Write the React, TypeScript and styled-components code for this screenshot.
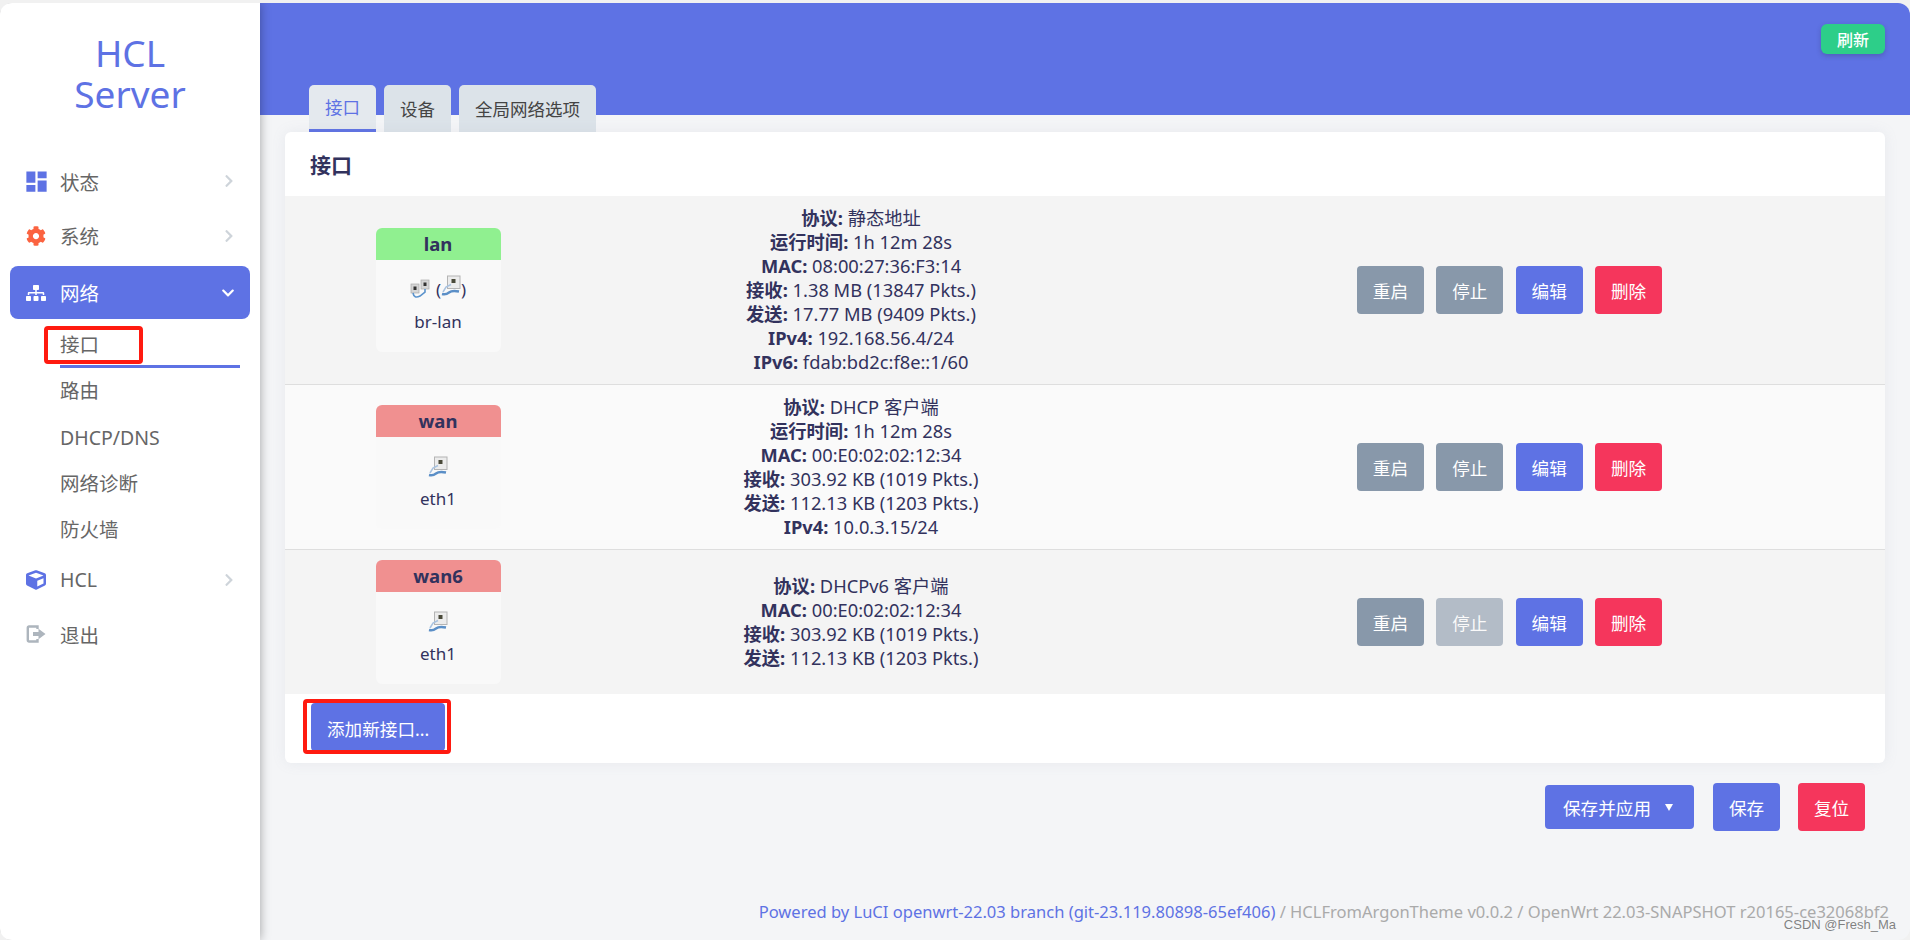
import styled, { createGlobalStyle } from "styled-components";
import { FaChevronDown, FaChevronRight, FaCog, FaCube, FaSitemap } from "react-icons/fa";
import { MdDashboard } from "react-icons/md";

const GlobalStyle = createGlobalStyle`
  html, body {
    margin: 0;
    padding: 0;
    background: #f1f1f1;
  }
  body {
    font-family: "Noto Sans", "Noto Sans CJK SC", sans-serif;
    color: #32325d;
  }
`;

const Shell = styled.div`
  display: grid;
  grid-template-columns: 260px 1fr;
  height: 937px;
  margin-top: 3px;
  border-radius: 12px;
  overflow: hidden;
  background: #f4f5f7;
  position: relative;
`;

const Sidebar = styled.aside`
  background: #fff;
  box-shadow: 0 0 10px rgba(0, 0, 0, 0.35);
  z-index: 2;
  display: flex;
  flex-direction: column;
`;

const Logo = styled.div`
  height: 152px;
  padding-top: 29px;
  box-sizing: border-box;
  text-align: center;
  font-size: 37px;
  line-height: 41px;
  color: #5e72e4;
`;

const MenuItem = styled.div<{ $active?: boolean }>`
  display: flex;
  align-items: center;
  height: ${(p) => (p.$active ? "53px" : "54.5px")};
  margin: ${(p) => (p.$active ? "2px 10px 3px" : "0 10px")};
  padding: 0 16px ${(p) => (p.$active ? "0" : "2px")};
  box-sizing: border-box;
  border-radius: 8px;
  font-size: 19.5px;
  color: ${(p) => (p.$active ? "#fff" : "#666")};
  background: ${(p) => (p.$active ? "#5e72e4" : "transparent")};
`;

const MenuIcon = styled.span<{ $color: string }>`
  width: 20px;
  height: 20px;
  margin-right: 14px;
  display: flex;
  align-items: center;
  justify-content: center;
  color: ${(p) => p.$color};
`;

const MenuLabel = styled.span`
  flex: 1;
`;

const Chevron = styled.span<{ $active?: boolean }>`
  display: flex;
  font-size: 14px;
  margin-right: ${(p) => (p.$active ? "-1px" : "-2px")};
  color: ${(p) => (p.$active ? "#fff" : "#ced4da")};
`;

const SubMenu = styled.div`
  display: flex;
  flex-direction: column;
`;

const SubItem = styled.div<{ $active?: boolean }>`
  position: relative;
  height: 46.3px;
  box-sizing: border-box;
  margin: 0 20px 0 60px;
  line-height: 46px;
  font-size: 19.5px;
  color: #666;
  border-bottom: ${(p) => (p.$active ? "3px solid #5e72e4" : "none")};
`;

const Highlight = styled.span<{ $menu?: boolean }>`
  position: absolute;
  border: 4px solid #ff1a10;
  border-radius: 4px;
  box-sizing: border-box;
  pointer-events: none;
  ${(p) =>
    p.$menu
      ? "left: -16px; top: 4px; width: 99px; height: 38px;"
      : "left: -8px; top: -4px; width: 148px; height: 55px;"}
`;

const Main = styled.main`
  display: flex;
  flex-direction: column;
  min-width: 0;
`;

const Header = styled.header`
  height: 112px;
  flex: none;
  background: #5e72e4;
  display: flex;
  flex-direction: column;
  padding: 21px 25px 0 49px;
  box-sizing: border-box;
`;

const RefreshButton = styled.button`
  align-self: flex-end;
  width: 64px;
  height: 30px;
  padding: 0;
  border: 0;
  border-radius: 6px;
  background: #2dce89;
  color: #fff;
  font: 500 16px "Noto Sans", "Noto Sans CJK SC", sans-serif;
  box-shadow: 0 2px 5px rgba(50, 50, 93, 0.3);
`;

const Tabs = styled.nav`
  display: flex;
  gap: 8px;
  margin-top: auto;
  margin-bottom: -17px;
`;

const Tab = styled.div<{ $active?: boolean }>`
  height: 47px;
  box-sizing: border-box;
  padding: 0 16px 1px;
  min-width: 67px;
  display: flex;
  align-items: center;
  justify-content: center;
  border-radius: 5px 5px 0 0;
  font-size: 17.5px;
  background: ${(p) => (p.$active ? "#e4e9ee" : "#dce3e9")};
  color: ${(p) => (p.$active ? "#5e72e4" : "#444")};
  border-bottom: ${(p) => (p.$active ? "3px solid #5e72e4" : "none")};
`;

const Content = styled.div`
  flex: 1;
  display: flex;
  flex-direction: column;
  padding: 17px 25px 0;
  min-height: 0;
`;

const Card = styled.section`
  background: #fff;
  border-radius: 6px;
  box-shadow: 0 0 14px rgba(136, 152, 170, 0.12);
`;

const CardTitle = styled.h3`
  margin: 0;
  height: 64px;
  padding-left: 25px;
  display: flex;
  align-items: center;
  font-size: 21px;
  font-weight: 700;
  color: #32325d;
`;

const Row = styled.div<{ $even?: boolean }>`
  display: grid;
  grid-template-columns: 306px 540px 1fr;
  align-items: center;
  padding: 10px 0;
  background: ${(p) => (p.$even ? "#fafafa" : "#f4f4f4")};
  & + & {
    border-top: 1px solid #dedede;
  }
`;

const Badge = styled.div`
  justify-self: center;
  width: 125px;
  height: 124px;
  border-radius: 6px;
  background: #f9f9f9;
  overflow: hidden;
  text-align: center;
  font-size: 17px;
`;

const BadgeHead = styled.div<{ $color: string }>`
  height: 32px;
  line-height: 32px;
  font-weight: 700;
  font-size: 18.5px;
  background: ${(p) => p.$color};
`;

const PortIcons = styled.div`
  height: 26px;
  margin-top: 16px;
  display: flex;
  align-items: center;
  justify-content: center;
  gap: 5px;
  line-height: 26px;
`;

const BadgeDevice = styled.div`
  margin-top: 8px;
  line-height: 24px;
`;

const Info = styled.div`
  text-align: center;
  font-size: 18.3px;
  line-height: 24px;
  white-space: nowrap;
`;

const InfoLine = styled.div`
  b {
    font-weight: 700;
  }
`;

const Actions = styled.div`
  display: flex;
  justify-content: center;
  gap: 12.4px;
  padding-left: 3px;
`;

const Button = styled.button<{ $kind: "gray" | "blue" | "red"; $off?: boolean }>`
  height: 48px;
  min-width: 67px;
  padding: 0 15px;
  border: 0;
  border-radius: 4px;
  color: #fff;
  font: 17.6px "Noto Sans", "Noto Sans CJK SC", sans-serif;
  opacity: ${(p) => (p.$off ? 0.6 : 1)};
  background: ${(p) =>
    p.$kind === "gray" ? "#8898aa" : p.$kind === "blue" ? "#5e72e4" : "#f5365c"};
`;

const AddButton = styled(Button)`
  padding: 2px 16px 0;
`;

const AddRow = styled.div`
  position: relative;
  height: 69px;
  padding: 9px 0 0 26px;
  box-sizing: border-box;
`;

const AddAnchor = styled.div`
  position: relative;
  display: inline-block;
`;

const BottomBar = styled.div`
  display: flex;
  justify-content: flex-end;
  align-items: center;
  gap: 18px;
  margin-top: 20px;
  padding-right: 20px;
`;

const ApplyButton = styled(Button)`
  height: 44px;
  width: 149px;
  padding: 0 0 0 18px;
  display: flex;
  align-items: center;
  margin-right: 1px;
`;

const Caret = styled.span`
  margin-left: 14px;
  width: 0;
  height: 0;
  border-left: 4px solid transparent;
  border-right: 4px solid transparent;
  border-top: 7px solid #fff;
`;

const Footer = styled.footer`
  margin-top: auto;
  height: 40px;
  flex: none;
  margin-right: -4px;
  text-align: right;
  white-space: nowrap;
  font-size: 16.55px;
  line-height: 24px;
  color: #aaa;
  a {
    color: #5e72e4;
  }
`;

const Watermark = styled.div`
  position: absolute;
  right: 14px;
  bottom: 8px;
  font: 13px "Liberation Sans", sans-serif;
  color: rgba(90, 90, 90, 0.75);
`;

const LogoutIcon = () => (
  <svg width="20" height="20" viewBox="0 0 20 20">
    <path
      d="M11.5 5V2.5H3a1.2 1.2 0 0 0-1.2 1.2v12.6A1.2 1.2 0 0 0 3 17.5h8.5V15"
      fill="none"
      stroke="currentColor"
      strokeWidth="2.4"
    />
    <path d="M7 8h5.5V4.8L19.5 10l-7 5.2V12H7z" fill="currentColor" />
  </svg>
);

const PortIcon = ({ double }: { double?: boolean }) =>
  double ? (
    <svg width="21" height="21" viewBox="0 0 21 21">
      <rect x="1" y="5" width="8" height="9" fill="#d6d6d6" stroke="#aaa" strokeWidth="0.7" />
      <rect x="11" y="1" width="8" height="9" fill="#d6d6d6" stroke="#aaa" strokeWidth="0.7" />
      <rect x="3.5" y="7.5" width="3" height="3.5" fill="#333" />
      <rect x="13.5" y="3.5" width="3" height="3.5" fill="#333" />
      <path d="M3 14 Q4 20 10 17 L15 13 V10" fill="none" stroke="#5b93cc" strokeWidth="1.6" />
    </svg>
  ) : (
    <svg width="20" height="21" viewBox="0 0 20 21">
      <rect x="6.5" y="1" width="12.5" height="12.5" fill="#ececec" stroke="#b4b4b4" strokeWidth="1" />
      <rect x="10.5" y="4" width="4" height="4" fill="#4a4a3a" />
      <path d="M2 17 L5 12 L10 9.5" fill="none" stroke="#a9c3e0" strokeWidth="1.5" />
      <path d="M1 19 Q5 20 8 17.5 T18 16.5" fill="none" stroke="#5b8fc7" strokeWidth="2.4" />
    </svg>
  );

interface Iface {
  name: string;
  color: string;
  bridge?: boolean;
  device: string;
  lines: [string, string][];
  stopOff?: boolean;
}

const interfaces: Iface[] = [
  {
    name: "lan",
    color: "#90f090",
    bridge: true,
    device: "br-lan",
    lines: [
      ["协议", "静态地址"],
      ["运行时间", "1h 12m 28s"],
      ["MAC", "08:00:27:36:F3:14"],
      ["接收", "1.38 MB (13847 Pkts.)"],
      ["发送", "17.77 MB (9409 Pkts.)"],
      ["IPv4", "192.168.56.4/24"],
      ["IPv6", "fdab:bd2c:f8e::1/60"],
    ],
  },
  {
    name: "wan",
    color: "#f09090",
    device: "eth1",
    lines: [
      ["协议", "DHCP 客户端"],
      ["运行时间", "1h 12m 28s"],
      ["MAC", "00:E0:02:02:12:34"],
      ["接收", "303.92 KB (1019 Pkts.)"],
      ["发送", "112.13 KB (1203 Pkts.)"],
      ["IPv4", "10.0.3.15/24"],
    ],
  },
  {
    name: "wan6",
    color: "#f09090",
    device: "eth1",
    stopOff: true,
    lines: [
      ["协议", "DHCPv6 客户端"],
      ["MAC", "00:E0:02:02:12:34"],
      ["接收", "303.92 KB (1019 Pkts.)"],
      ["发送", "112.13 KB (1203 Pkts.)"],
    ],
  },
];

const App = () => {
  return (
    <>
      <GlobalStyle />
      <Shell>
        <Sidebar>
          <Logo>
            HCL
            <br />
            Server
          </Logo>
          <MenuItem>
            <MenuIcon $color="#5e72e4">
              <MdDashboard size={27} style={{ flex: "none" }} />
            </MenuIcon>
            <MenuLabel>状态</MenuLabel>
            <Chevron>
              <FaChevronRight />
            </Chevron>
          </MenuItem>
          <MenuItem>
            <MenuIcon $color="#fb6340">
              <FaCog size={20} />
            </MenuIcon>
            <MenuLabel>系统</MenuLabel>
            <Chevron>
              <FaChevronRight />
            </Chevron>
          </MenuItem>
          <MenuItem $active>
            <MenuIcon $color="#fff">
              <FaSitemap size={20} />
            </MenuIcon>
            <MenuLabel>网络</MenuLabel>
            <Chevron $active>
              <FaChevronDown />
            </Chevron>
          </MenuItem>
          <SubMenu>
            <SubItem $active>
              接口
              <Highlight $menu />
            </SubItem>
            <SubItem>路由</SubItem>
            <SubItem>DHCP/DNS</SubItem>
            <SubItem>网络诊断</SubItem>
            <SubItem>防火墙</SubItem>
          </SubMenu>
          <MenuItem>
            <MenuIcon $color="#5e72e4">
              <FaCube size={20} />
            </MenuIcon>
            <MenuLabel>HCL</MenuLabel>
            <Chevron>
              <FaChevronRight />
            </Chevron>
          </MenuItem>
          <MenuItem>
            <MenuIcon $color="#adb5bd">
              <LogoutIcon />
            </MenuIcon>
            <MenuLabel>退出</MenuLabel>
          </MenuItem>
        </Sidebar>
        <Main>
          <Header>
            <RefreshButton>刷新</RefreshButton>
            <Tabs>
              <Tab $active>接口</Tab>
              <Tab>设备</Tab>
              <Tab>全局网络选项</Tab>
            </Tabs>
          </Header>
          <Content>
            <Card>
              <CardTitle>接口</CardTitle>
              {interfaces.map((item, i) => (
                <Row key={item.name} $even={i % 2 === 1}>
                  <Badge>
                    <BadgeHead $color={item.color}>{item.name}</BadgeHead>
                    <PortIcons>
                      {item.bridge ? (
                        <>
                          <PortIcon double />
                          <span>
                            (<PortIcon />)
                          </span>
                        </>
                      ) : (
                        <PortIcon />
                      )}
                    </PortIcons>
                    <BadgeDevice>{item.device}</BadgeDevice>
                  </Badge>
                  <Info>
                    {item.lines.map(([k, v]) => (
                      <InfoLine key={k}>
                        <b>{k}:</b> {v}
                      </InfoLine>
                    ))}
                  </Info>
                  <Actions>
                    <Button $kind="gray">重启</Button>
                    <Button $kind="gray" $off={item.stopOff}>
                      停止
                    </Button>
                    <Button $kind="blue">编辑</Button>
                    <Button $kind="red">删除</Button>
                  </Actions>
                </Row>
              ))}
              <AddRow>
                <AddAnchor>
                  <AddButton $kind="blue">添加新接口...</AddButton>
                  <Highlight />
                </AddAnchor>
              </AddRow>
            </Card>
            <BottomBar>
              <ApplyButton $kind="blue">
                保存并应用
                <Caret />
              </ApplyButton>
              <Button $kind="blue">保存</Button>
              <Button $kind="red">复位</Button>
            </BottomBar>
            <Footer>
              <a>Powered by LuCI openwrt-22.03 branch (git-23.119.80898-65ef406)</a> /
              HCLFromArgonTheme v0.0.2 / OpenWrt 22.03-SNAPSHOT r20165-ce32068bf2
            </Footer>
          </Content>
        </Main>
        <Watermark>CSDN @Fresh_Ma</Watermark>
      </Shell>
    </>
  );
};

export default App;
